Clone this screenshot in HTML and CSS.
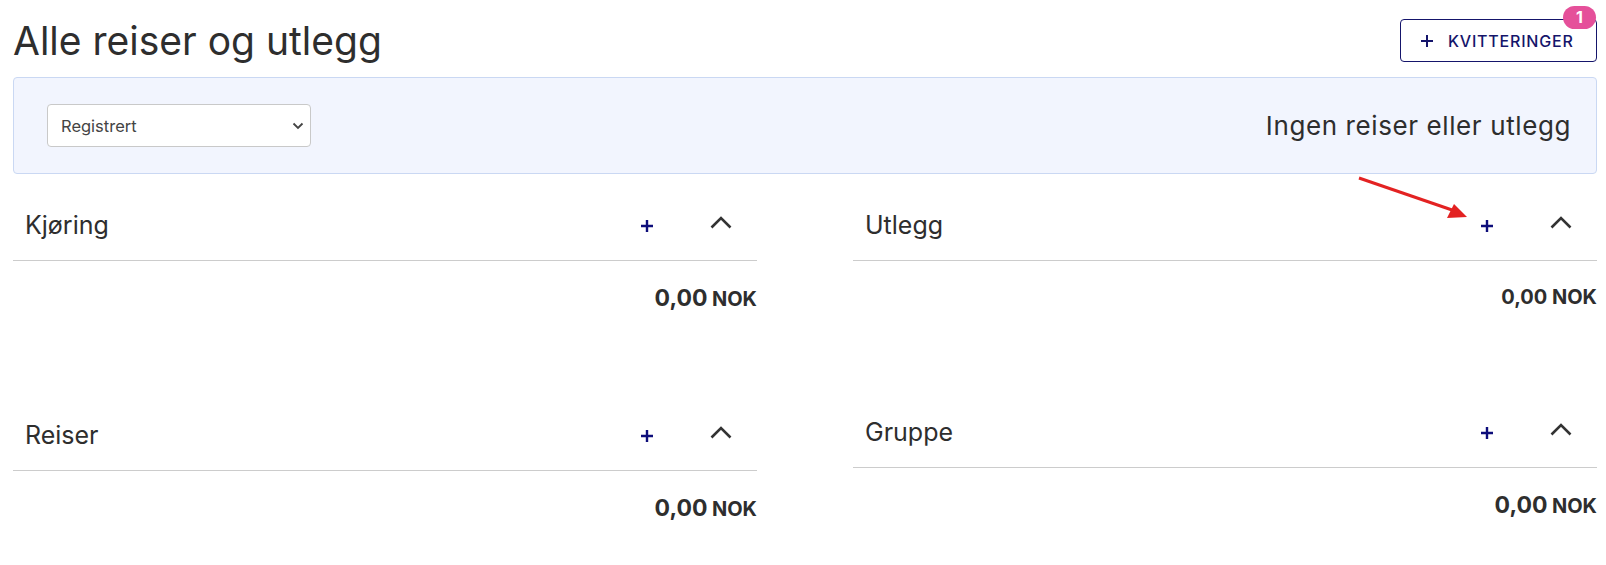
FILE: index.html
```html
<!DOCTYPE html>
<html lang="no">
<head>
  <meta charset="UTF-8">
  <title>Alle reiser og utlegg</title>
  <link rel="stylesheet" href="styles.css">
</head>
<body>
<div class="page">
  <div class="top">
    <h1>Alle reiser og utlegg</h1>
    <button class="receipts">
      <svg width="14" height="14" viewBox="0 0 14 14"><path d="M7 1v12M1 7h12" stroke="currentColor" stroke-width="2"/></svg>
      <span>KVITTERINGER</span>
      <span class="badge">1</span>
    </button>
  </div>

  <div class="filter">
    <div class="select">
      <select>
        <option>Registrert</option>
      </select>
      <svg class="caret" width="12" height="8" viewBox="0 0 12 8"><path d="M1.5 1.5l4.5 4.5 4.5-4.5" fill="none" stroke="#444" stroke-width="1.8"/></svg>
    </div>
    <div class="empty">Ingen reiser eller utlegg</div>
  </div>

  <div class="columns">
    <div class="column">
      <div class="section">
        <div class="head">
          <span class="name">Kjøring</span>
          <span class="add"><svg width="12" height="12" viewBox="0 0 12 12"><path d="M6 0v12M0 6h12" stroke="currentColor" stroke-width="2.4"/></svg></span>
          <span class="toggle"><svg width="22" height="13" viewBox="0 0 22 13"><path d="M1.5 11.5l9.5-9.5 9.5 9.5" fill="none" stroke="#333" stroke-width="2.6"/></svg></span>
        </div>
        <div class="sum"><b>0,00</b> <small>NOK</small></div>
      </div>
      <div class="section">
        <div class="head">
          <span class="name">Reiser</span>
          <span class="add"><svg width="12" height="12" viewBox="0 0 12 12"><path d="M6 0v12M0 6h12" stroke="currentColor" stroke-width="2.4"/></svg></span>
          <span class="toggle"><svg width="22" height="13" viewBox="0 0 22 13"><path d="M1.5 11.5l9.5-9.5 9.5 9.5" fill="none" stroke="#333" stroke-width="2.6"/></svg></span>
        </div>
        <div class="sum"><b>0,00</b> <small>NOK</small></div>
      </div>
    </div>

    <div class="column">
      <div class="section">
        <div class="head">
          <span class="name">Utlegg</span>
          <span class="add"><svg width="12" height="12" viewBox="0 0 12 12"><path d="M6 0v12M0 6h12" stroke="currentColor" stroke-width="2.4"/></svg></span>
          <span class="toggle"><svg width="22" height="13" viewBox="0 0 22 13"><path d="M1.5 11.5l9.5-9.5 9.5 9.5" fill="none" stroke="#333" stroke-width="2.6"/></svg></span>
        </div>
        <div class="sum flat"><b>0,00 NOK</b></div>
      </div>
      <div class="section">
        <div class="head">
          <span class="name">Gruppe</span>
          <span class="add"><svg width="12" height="12" viewBox="0 0 12 12"><path d="M6 0v12M0 6h12" stroke="currentColor" stroke-width="2.4"/></svg></span>
          <span class="toggle"><svg width="22" height="13" viewBox="0 0 22 13"><path d="M1.5 11.5l9.5-9.5 9.5 9.5" fill="none" stroke="#333" stroke-width="2.6"/></svg></span>
        </div>
        <div class="sum"><b>0,00</b> <small>NOK</small></div>
      </div>
    </div>
  </div>

  <!-- markering lagt over skjermbildet -->
  <svg class="arrow" width="130" height="60" viewBox="0 0 130 60">
    <path d="M4 4L100 37" stroke="#e32222" stroke-width="3"/>
    <path d="M112 43L92 44L99 30Z" fill="#e32222"/>
  </svg>
</div>
</body>
</html>
```

FILE: styles.css
```css
html, body {
  margin: 0;
  background: white;
}

body {
  font-family: Inter, "Noto Sans", sans-serif;
  color: #2e2e2e;
}

.page {
  position: relative;
  padding: 0 9px 0 13px;
}

/* topplinje */
.top {
  display: flex;
  align-items: center;
  justify-content: space-between;
  padding-top: 19px;
  margin-bottom: 15px;
}

h1 {
  margin: 0;
  font-size: 39px;
  font-weight: 400;
  line-height: 43px;
}

.receipts {
  position: relative;
  display: flex;
  align-items: center;
  gap: 14px;
  height: 43px;
  width: 197px;
  padding: 0 0 0 19px;
  border: 1px solid #15156b;
  border-radius: 4px;
  background: white;
  color: #15156b;
  font-family: inherit;
  font-size: 16px;
  font-weight: 500;
  letter-spacing: 0.8px;
}

.badge {
  position: absolute;
  top: -14px;
  right: 0;
  width: 33px;
  height: 23px;
  border-radius: 12px;
  background: #e5509a;
  color: white;
  font-size: 16px;
  font-weight: 700;
  line-height: 23px;
  text-align: center;
  letter-spacing: 0;
}

/* filter */
.filter {
  display: flex;
  align-items: center;
  justify-content: space-between;
  height: 95px;
  padding: 0 25px 0 33px;
  border: 1px solid #cad8f3;
  border-radius: 4px;
  background: #f2f5fe;
}

.select {
  position: relative;
}

.select select {
  display: block;
  width: 264px;
  height: 43px;
  padding: 0 13px;
  border: 1px solid #c9c9c9;
  border-radius: 4px;
  background: white;
  color: #444;
  font-family: inherit;
  font-size: 16.5px;
  -webkit-appearance: none;
  appearance: none;
}

.caret {
  position: absolute;
  top: 18px;
  right: 7px;
}

.empty {
  font-size: 26px;
  letter-spacing: 0.6px;
}

/* seksjoner */
.columns {
  display: flex;
  gap: 96px;
  margin-top: 16px;
}

.column {
  flex: 1;
}

.head {
  display: flex;
  align-items: center;
  height: 70px;
  padding-left: 12px;
  border-bottom: 1px solid #cccccc;
}

.name {
  flex: 1;
  font-size: 25px;
}

.add {
  display: flex;
  width: 12px;
  margin-top: 2px;
  color: #0d0d7a;
}

.toggle {
  display: flex;
  margin: -6px 25px 0 57px;
}

.sum {
  padding: 22px 0 85px;
  text-align: right;
  line-height: 30px;
}

.section:last-child .sum {
  padding-bottom: 30px;
}

.sum b {
  font-size: 23px;
  font-weight: 700;
}

.sum small {
  font-size: 20px;
  font-weight: 700;
}

.sum.flat {
  line-height: 28px;
}

.sum.flat b {
  font-size: 20px;
}

.arrow {
  position: absolute;
  left: 1355px;
  top: 174px;
}
```
